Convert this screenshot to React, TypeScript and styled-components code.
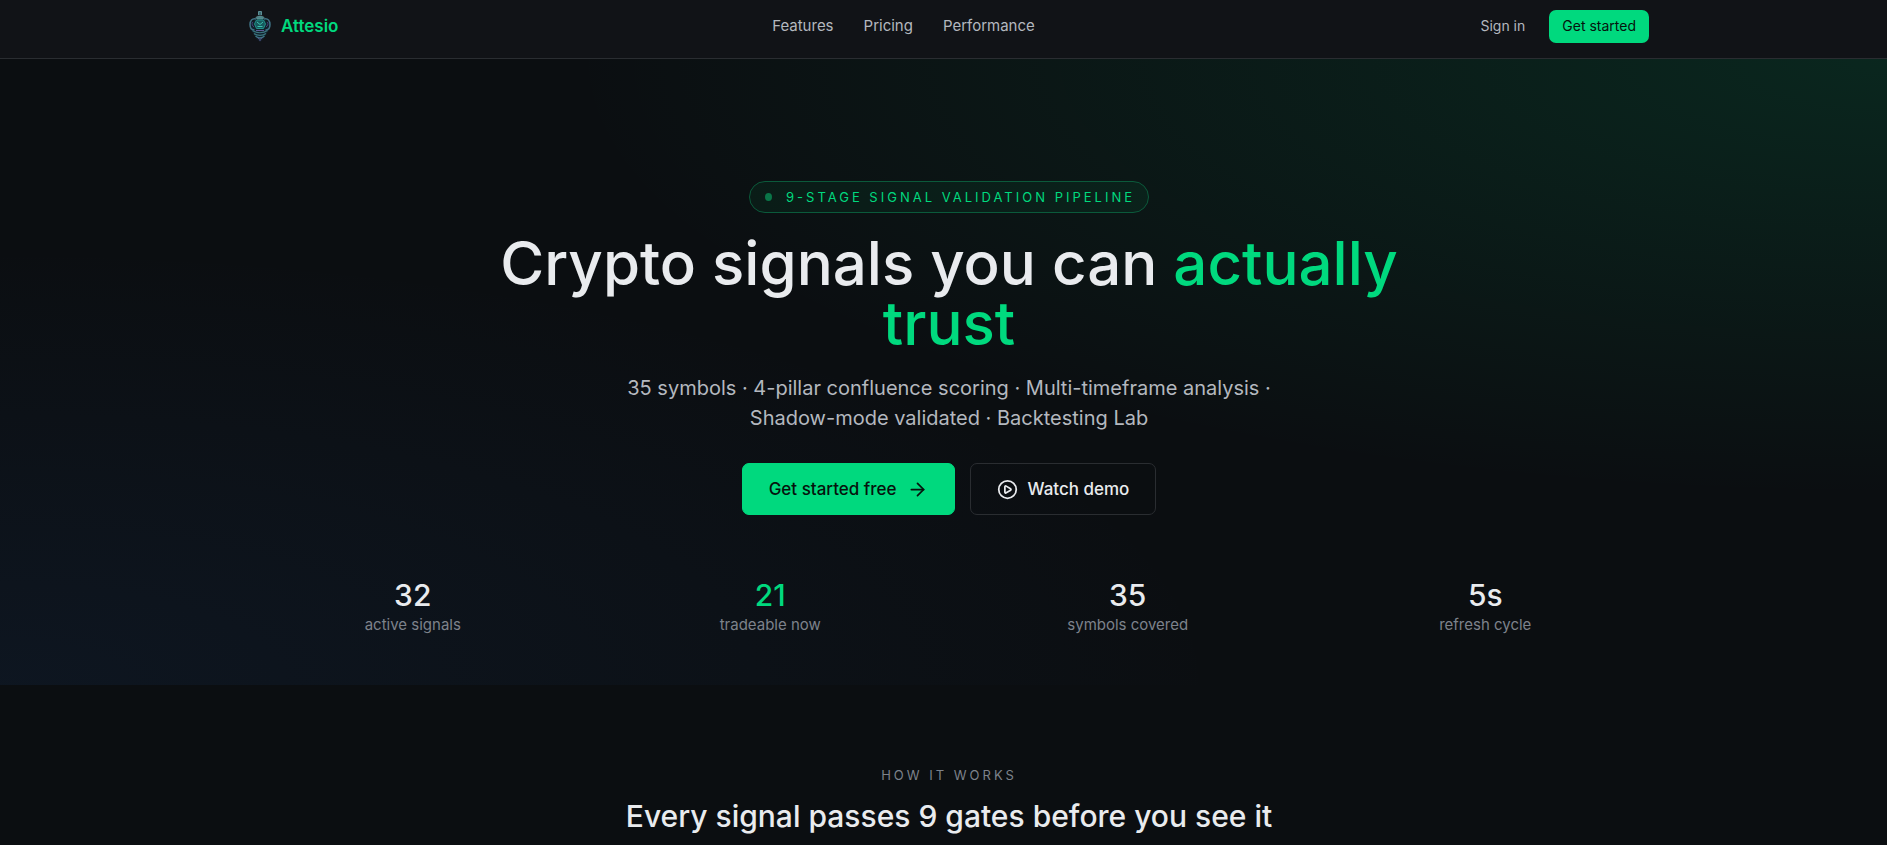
import React from "react";
import styled, { createGlobalStyle } from "styled-components";
import { ArrowRight, CirclePlay } from "lucide-react";

const green = "#00d97e";
const ink = "#e9ebee";

const GlobalStyle = createGlobalStyle`
  *, *::before, *::after { box-sizing: border-box; }
  body {
    margin: 0;
    background: #0b0e11;
    color: ${ink};
    font-family: Inter, "Liberation Sans", sans-serif;
  }
  h1, h2, p, dl, dd, dt { margin: 0; }
  a { color: inherit; text-decoration: none; }
  button { font: inherit; cursor: pointer; }
`;

const Page = styled.div`
  min-height: 100vh;
  overflow: hidden;
`;

const Header = styled.header`
  background: #111317;
  border-bottom: 1px solid #2a2d31;
  padding: 10px 0 15px 11px;
`;

const Container = styled.div`
  width: 100%;
  max-width: 1400px;
  margin: 0 auto;
`;

const Bar = styled(Container)`
  display: flex;
  align-items: center;
  justify-content: space-between;
`;

const Brand = styled.a`
  display: flex;
  align-items: center;
  gap: 10px;
  padding-bottom: 1px;
  color: ${green};
  font-size: 17px;
  font-weight: 600;
  line-height: 30px;
`;

const Nav = styled.nav`
  display: flex;
  gap: 30px;
  padding-bottom: 2px;
  color: #b4b8bf;
  font-size: 15px;
  line-height: 24px;
`;

const Actions = styled.div`
  display: flex;
  align-items: center;
  gap: 12px;
  font-size: 14px;
`;

const SignIn = styled.a`
  padding: 0 12px 2px;
  color: #b4b8bf;
  line-height: 30px;
`;

const SmallButton = styled.button`
  height: 33px;
  padding: 0 13px 2px;
  border: 0;
  border-radius: 7px;
  background: ${green};
  color: #06130d;
`;

const Hero = styled.section`
  display: flex;
  flex-direction: column;
  align-items: center;
  padding: 122px 0 50px 11px;
  text-align: center;
  background:
    radial-gradient(ellipse 70% 70% at 100% 0%, rgba(0, 217, 126, 0.12), transparent),
    radial-gradient(ellipse 65% 70% at 0% 100%, rgba(40, 100, 190, 0.09), transparent);
`;

const Badge = styled.div`
  display: flex;
  align-items: center;
  gap: 14px;
  height: 32px;
  padding: 0 13px 0 15px;
  border: 1px solid #0b5a3b;
  border-radius: 16px;
  background: rgba(0, 217, 126, 0.06);
  color: ${green};
  font-size: 13px;
  letter-spacing: 3px;
`;

const Dot = styled.span`
  width: 7px;
  height: 8px;
  border-radius: 50%;
  background: #0a7548;
`;

const Title = styled.h1`
  max-width: 960px;
  margin-top: 20px;
  font-size: 60px;
  font-weight: 500;
  line-height: 60px;
`;

const Accent = styled.span`
  color: ${green};
`;

const Lead = styled.p`
  max-width: 672px;
  margin-top: 20px;
  color: #b4b8bf;
  font-size: 20px;
  line-height: 30px;
`;

const Buttons = styled.div`
  display: flex;
  gap: 15px;
  margin-top: 30px;
`;

const Button = styled.button<{ $primary?: boolean }>`
  display: flex;
  align-items: center;
  gap: 10px;
  height: 52px;
  padding: 0 26px;
  border: 1px solid ${(p) => (p.$primary ? green : "#2a2d31")};
  border-radius: 7px;
  background: ${(p) => (p.$primary ? green : "transparent")};
  color: ${(p) => (p.$primary ? "#06130d" : ink)};
  font-size: 17px;
  font-weight: 500;
`;

const Stats = styled.dl`
  display: grid;
  grid-template-columns: repeat(4, 1fr);
  gap: 30px;
  width: 100%;
  max-width: 1400px;
  margin-top: 60px;
`;

const Stat = styled.div`
  display: flex;
  flex-direction: column-reverse;
`;

const StatValue = styled.dd<{ $accent?: boolean }>`
  color: ${(p) => (p.$accent ? green : ink)};
  font-size: 30px;
  font-weight: 500;
  line-height: 40px;
`;

const StatLabel = styled.dt`
  color: #7d828b;
  font-size: 15px;
  line-height: 20px;
`;

const Works = styled.section`
  padding: 80px 0 0 11px;
  text-align: center;
`;

const Eyebrow = styled.p`
  color: #7d828b;
  font-size: 13px;
  letter-spacing: 3px;
  line-height: 20px;
`;

const Heading = styled.h2`
  margin-top: 10px;
  font-size: 30px;
  font-weight: 500;
  line-height: 42px;
`;

const LogoMark = () => (
  <svg width="22" height="32" viewBox="0 0 22 32" fill="none" aria-hidden="true">
    <path d="M7 9h8l6 4v6l-3 4-3 5-4 4-4-4-3-5-3-4v-6z" fill="#12212b" />
    <path d="M9.5 5V1.5h3V5" fill="#3c6a72" stroke="#5d8f96" />
    <path d="M7 7.5c1-2 7-2 8 0l-1 1.500H8z" fill="#4c8589" stroke="#6b9a9f" strokeWidth="0.6" />
    <path d="M7 9C3 8 1 11 1 14.500S3 20 5.500 20M15 9c4-1 6 2 6 5.500S19 20 16.500 20" stroke="#3f7285" strokeWidth="1.500" />
    <path d="M3.500 12c-1 2 0 4 1.500 5M18.500 12c1 2 0 4-1.500 5" stroke="#46407a" />
    <path d="M7.500 10h7l2 4-2 4.500h-7l-2-4.500z" fill="#175a5e" stroke="#219089" />
    <path d="M8 12l3 2.500 3-2.500M8.500 16.500h5" stroke="#3cc0ae" />
    <path d="M3.500 20.500c4 3 11 3 15 0M5 23.500c3 2.500 9 2.500 12 0M6.500 26c2.500 2.500 6.500 2.500 9 0" stroke="#3b7580" strokeWidth="1.200" />
    <path d="M7 20.500h8M8.500 27.500c1 2 4 2 5 0M11 29.500V31" stroke="#5d5c96" />
  </svg>
);

const stats = [
  { value: "32", label: "active signals" },
  { value: "21", label: "tradeable now", accent: true },
  { value: "35", label: "symbols covered" },
  { value: "5s", label: "refresh cycle" },
];

export default function App() {
  return (
    <Page>
      <GlobalStyle />
      <Header>
        <Bar>
          <Brand href="#">
            <LogoMark />
            Attesio
          </Brand>
          <Nav>
            <a href="#features">Features</a>
            <a href="#pricing">Pricing</a>
            <a href="#performance">Performance</a>
          </Nav>
          <Actions>
            <SignIn href="#signin">Sign in</SignIn>
            <SmallButton>Get started</SmallButton>
          </Actions>
        </Bar>
      </Header>
      <main>
        <Hero>
          <Badge>
            <Dot />
            9-STAGE SIGNAL VALIDATION PIPELINE
          </Badge>
          <Title>
            Crypto signals you can <Accent>actually trust</Accent>
          </Title>
          <Lead>
            35 symbols · 4-pillar confluence scoring · Multi-timeframe analysis · Shadow-mode validated · Backtesting
            Lab
          </Lead>
          <Buttons>
            <Button $primary>
              Get started free
              <ArrowRight size={21} strokeWidth={2} />
            </Button>
            <Button>
              <CirclePlay size={21} strokeWidth={2} />
              Watch demo
            </Button>
          </Buttons>
          <Stats>
            {stats.map((s) => (
              <Stat key={s.label}>
                <StatLabel>{s.label}</StatLabel>
                <StatValue $accent={s.accent}>{s.value}</StatValue>
              </Stat>
            ))}
          </Stats>
        </Hero>
        <Works id="features">
          <Eyebrow>HOW IT WORKS</Eyebrow>
          <Heading>Every signal passes 9 gates before you see it</Heading>
        </Works>
      </main>
    </Page>
  );
}
